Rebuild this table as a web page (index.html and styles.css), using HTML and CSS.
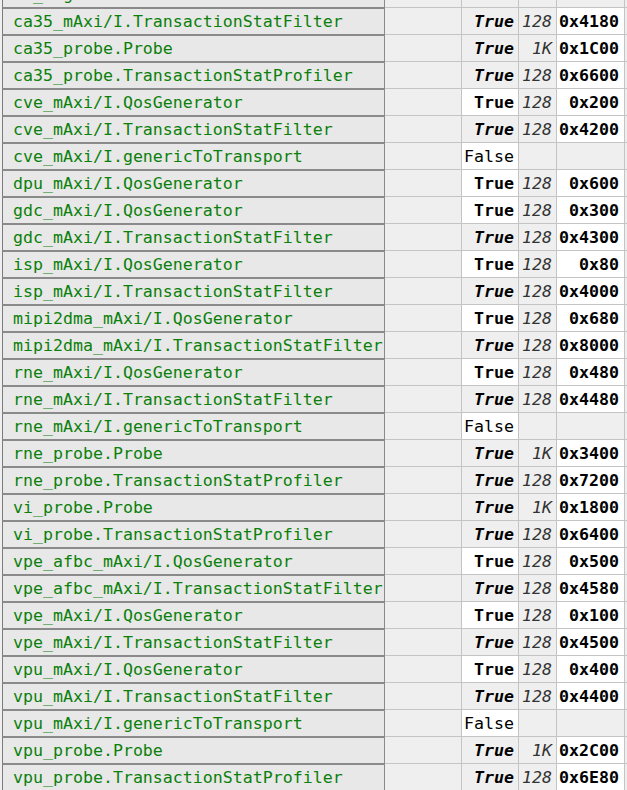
FILE: index.html
```html
<!DOCTYPE html>
<html>
<head>
<meta charset="utf-8">
<link rel="stylesheet" href="styles.css">
</head>
<body>
<div class="sheet">
  <div class="name">cs_cfg.Translator</div><div class="c"></div><div class="c"></div><div class="c n"></div><div class="c"></div><div class="c"></div>

  <div class="name">ca35_mAxi/I.TransactionStatFilter</div><div class="c"></div><div class="c ti">True</div><div class="c n">128</div><div class="c hx">0x4180</div><div class="c"></div>
  <div class="name">ca35_probe.Probe</div><div class="c"></div><div class="c ti">True</div><div class="c n">1K</div><div class="c hx">0x1C00</div><div class="c"></div>
  <div class="name">ca35_probe.TransactionStatProfiler</div><div class="c"></div><div class="c ti">True</div><div class="c n">128</div><div class="c hx">0x6600</div><div class="c"></div>
  <div class="name">cve_mAxi/I.QosGenerator</div><div class="c"></div><div class="c tw">True</div><div class="c n">128</div><div class="c hx">0x200</div><div class="c"></div>
  <div class="name">cve_mAxi/I.TransactionStatFilter</div><div class="c"></div><div class="c ti">True</div><div class="c n">128</div><div class="c hx">0x4200</div><div class="c"></div>
  <div class="name">cve_mAxi/I.genericToTransport</div><div class="c"></div><div class="c fw">False</div><div class="c n"></div><div class="c"></div><div class="c"></div>
  <div class="name">dpu_mAxi/I.QosGenerator</div><div class="c"></div><div class="c tw">True</div><div class="c n">128</div><div class="c hx">0x600</div><div class="c"></div>
  <div class="name">gdc_mAxi/I.QosGenerator</div><div class="c"></div><div class="c tw">True</div><div class="c n">128</div><div class="c hx">0x300</div><div class="c"></div>
  <div class="name">gdc_mAxi/I.TransactionStatFilter</div><div class="c"></div><div class="c ti">True</div><div class="c n">128</div><div class="c hx">0x4300</div><div class="c"></div>
  <div class="name">isp_mAxi/I.QosGenerator</div><div class="c"></div><div class="c tw">True</div><div class="c n">128</div><div class="c hx">0x80</div><div class="c"></div>
  <div class="name">isp_mAxi/I.TransactionStatFilter</div><div class="c"></div><div class="c ti">True</div><div class="c n">128</div><div class="c hx">0x4000</div><div class="c"></div>
  <div class="name">mipi2dma_mAxi/I.QosGenerator</div><div class="c"></div><div class="c tw">True</div><div class="c n">128</div><div class="c hx">0x680</div><div class="c"></div>
  <div class="name">mipi2dma_mAxi/I.TransactionStatFilter</div><div class="c"></div><div class="c ti">True</div><div class="c n">128</div><div class="c hx">0x8000</div><div class="c"></div>
  <div class="name">rne_mAxi/I.QosGenerator</div><div class="c"></div><div class="c tw">True</div><div class="c n">128</div><div class="c hx">0x480</div><div class="c"></div>
  <div class="name">rne_mAxi/I.TransactionStatFilter</div><div class="c"></div><div class="c ti">True</div><div class="c n">128</div><div class="c hx">0x4480</div><div class="c"></div>
  <div class="name">rne_mAxi/I.genericToTransport</div><div class="c"></div><div class="c fw">False</div><div class="c n"></div><div class="c"></div><div class="c"></div>
  <div class="name">rne_probe.Probe</div><div class="c"></div><div class="c ti">True</div><div class="c n">1K</div><div class="c hx">0x3400</div><div class="c"></div>
  <div class="name">rne_probe.TransactionStatProfiler</div><div class="c"></div><div class="c ti">True</div><div class="c n">128</div><div class="c hx">0x7200</div><div class="c"></div>
  <div class="name">vi_probe.Probe</div><div class="c"></div><div class="c ti">True</div><div class="c n">1K</div><div class="c hx">0x1800</div><div class="c"></div>
  <div class="name">vi_probe.TransactionStatProfiler</div><div class="c"></div><div class="c ti">True</div><div class="c n">128</div><div class="c hx">0x6400</div><div class="c"></div>
  <div class="name">vpe_afbc_mAxi/I.QosGenerator</div><div class="c"></div><div class="c tw">True</div><div class="c n">128</div><div class="c hx">0x500</div><div class="c"></div>
  <div class="name">vpe_afbc_mAxi/I.TransactionStatFilter</div><div class="c"></div><div class="c ti">True</div><div class="c n">128</div><div class="c hx">0x4580</div><div class="c"></div>
  <div class="name">vpe_mAxi/I.QosGenerator</div><div class="c"></div><div class="c tw">True</div><div class="c n">128</div><div class="c hx">0x100</div><div class="c"></div>
  <div class="name">vpe_mAxi/I.TransactionStatFilter</div><div class="c"></div><div class="c ti">True</div><div class="c n">128</div><div class="c hx">0x4500</div><div class="c"></div>
  <div class="name">vpu_mAxi/I.QosGenerator</div><div class="c"></div><div class="c tw">True</div><div class="c n">128</div><div class="c hx">0x400</div><div class="c"></div>
  <div class="name">vpu_mAxi/I.TransactionStatFilter</div><div class="c"></div><div class="c ti">True</div><div class="c n">128</div><div class="c hx">0x4400</div><div class="c"></div>
  <div class="name">vpu_mAxi/I.genericToTransport</div><div class="c"></div><div class="c fw">False</div><div class="c n"></div><div class="c"></div><div class="c"></div>
  <div class="name">vpu_probe.Probe</div><div class="c"></div><div class="c ti">True</div><div class="c n">1K</div><div class="c hx">0x2C00</div><div class="c"></div>
  <div class="name">vpu_probe.TransactionStatProfiler</div><div class="c"></div><div class="c ti">True</div><div class="c n">128</div><div class="c hx">0x6E80</div><div class="c"></div>
</div>
</body>
</html>
```

FILE: styles.css
```css
html, body {
  margin: 0;
  padding: 0;
  width: 627px;
  height: 790px;
  overflow: hidden;
  background: #efefef;
}

.sheet {
  display: grid;
  grid-template-columns: 383px 77px 57px 38px 68px 40px;
  grid-auto-rows: 27px;
  margin-top: -20px;
  margin-left: 2px;
  font-family: "DejaVu Sans Mono", monospace;
  font-size: 16.6px;
  white-space: nowrap;
}

.sheet > div {
  box-sizing: border-box;
  overflow: hidden;
  padding-top: 2px;
}

.name {
  background: #e8e8e8;
  color: #0b800b;
  border-top: 2px solid #8a8a8a;
  border-left: 1px solid #7c7c7c;
  border-right: 1px solid #8a8a8a;
  padding-left: 10px;
  line-height: 22px;
}

.c {
  background: #efefef;
  border-top: 1px solid #c4c4c4;
  border-right: 1px solid #c4c4c4;
  line-height: 24px;
  text-align: right;
  padding-right: 4px;
  color: #000;
}

.ti {
  font-weight: bold;
  font-style: italic;
}

.tw {
  background: #fff;
  font-weight: bold;
}

.fw {
  background: #fff;
}

.n {
  font-style: italic;
  color: #333;
}

.hx {
  background: #fff;
  font-weight: bold;
  padding-right: 5px;
}
```
